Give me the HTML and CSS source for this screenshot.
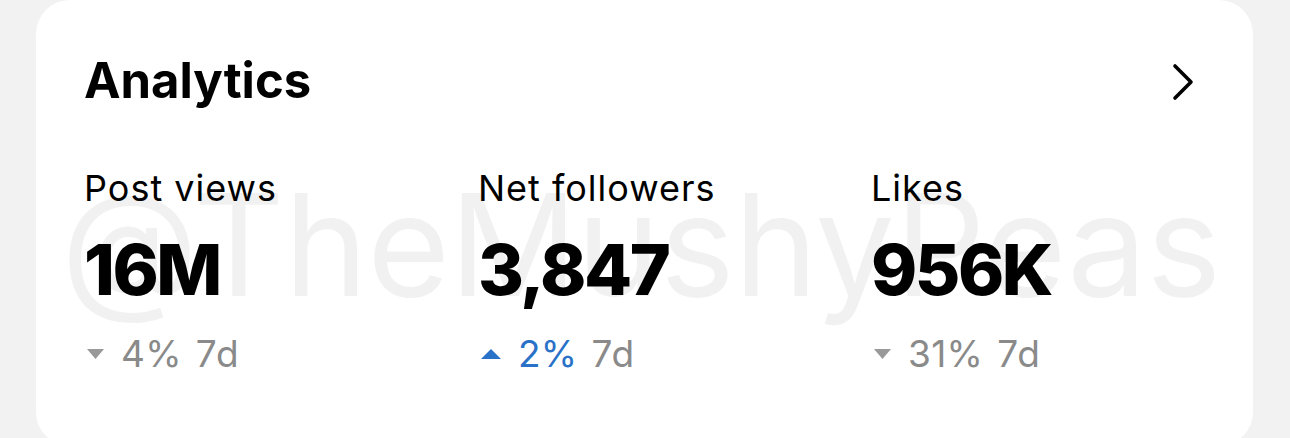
FILE: index.html
```html
<!DOCTYPE html>
<html lang="en">
  <head>
    <meta charset="UTF-8" />
    <title>Analytics</title>
    <link rel="stylesheet" href="styles.css">
  </head>
  <body>
    <div class="card">
      <div class="watermark">@TheMushyPeas</div>

      <div class="card-header">
        <h2>Analytics</h2>
        <svg class="chevron" width="24" height="38" viewBox="0 0 24 38">
          <polyline points="4,3 20,19 4,35" fill="none" stroke="#000" stroke-width="3.6" stroke-linecap="round" stroke-linejoin="round" />
        </svg>
      </div>

      <div class="stats">
        <div class="stat">
          <div class="stat-label">Post views</div>
          <div class="stat-value">16M</div>
          <div class="stat-change down">
            <svg class="arrow" width="17" height="10" viewBox="0 0 17 10"><polygon points="0,0 17,0 8.5,10" /></svg>
            <span class="pct">4%</span>
            <span class="period">7d</span>
          </div>
        </div>
        <div class="stat">
          <div class="stat-label">Net followers</div>
          <div class="stat-value">3,847</div>
          <div class="stat-change up">
            <svg class="arrow" width="20" height="10" viewBox="0 0 20 10"><polygon points="0,10 20,10 10,0" /></svg>
            <span class="pct">2%</span>
            <span class="period">7d</span>
          </div>
        </div>
        <div class="stat">
          <div class="stat-label">Likes</div>
          <div class="stat-value">956K</div>
          <div class="stat-change down">
            <svg class="arrow" width="17" height="10" viewBox="0 0 17 10"><polygon points="0,0 17,0 8.5,10" /></svg>
            <span class="pct">31%</span>
            <span class="period">7d</span>
          </div>
        </div>
      </div>
    </div>
  </body>
</html>
```

FILE: styles.css
```css
body {
  margin: 0;
  background-color: #f2f2f2;
  font-family: "Inter", "Noto Sans", sans-serif;
  color: #000;
  overflow: hidden;
}
.card {
  position: relative;
  margin-left: 36px;
  width: 1217px;
  height: 446px;
  box-sizing: border-box;
  padding: 57px 58px 0 48px;
  background: #ffffff;
  border-radius: 34px;
}
/* watermark sits over the card, behind nothing clickable */
.watermark {
  position: absolute;
  left: 25px;
  top: 173px;
  font-size: 142px;
  line-height: 1;
  letter-spacing: -0.8px;
  color: rgba(0, 0, 0, 0.055);
  white-space: nowrap;
  pointer-events: none;
}
.card-header {
  display: flex;
  justify-content: space-between;
  align-items: center;
}
h2 {
  margin: 0;
  font-size: 49px;
  line-height: 48px;
  font-weight: 700;
}
.chevron {
  display: block;
  margin-top: 2px;
}
.stats {
  display: grid;
  grid-template-columns: 394px 393px auto;
  margin-top: 66px;
}
.stat-label {
  font-size: 36px;
  line-height: 35px;
  letter-spacing: 1px;
}
.stat-value {
  margin-top: 29px;
  font-size: 70px;
  line-height: 70px;
  font-weight: 800;
  letter-spacing: -2.5px;
}
.stat-change {
  display: flex;
  align-items: baseline;
  margin-top: 31px;
  font-size: 37px;
  line-height: 35px;
  color: #8a8a8a;
}
.pct {
  letter-spacing: 0.3px;
}
.period {
  margin-left: 14px;
  letter-spacing: 1px;
}
.arrow {
  align-self: center;
  margin: 0 17px 0 3px;
}
.down .arrow {
  fill: #999999;
}
.up .arrow {
  fill: #2a72c8;
}
.up .pct {
  color: #2a72c8;
}
```
